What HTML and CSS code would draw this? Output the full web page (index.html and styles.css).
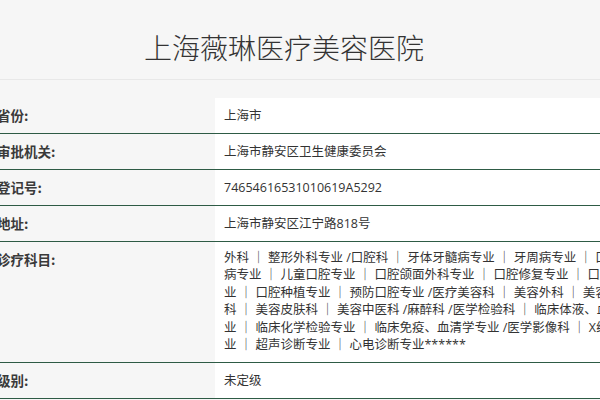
FILE: index.html
```
<!DOCTYPE html>
<html lang="zh-CN">
<head>
<meta charset="utf-8">
<title>上海薇琳医疗美容医院</title>
<link rel="stylesheet" href="styles.css">
</head>
<body>
<div class="page">
  <header class="head">
    <h1 class="title">上海薇琳医疗美容医院</h1>
  </header>
  <div class="info">
    <div class="row">
      <div class="k">省份:</div>
      <div class="v">上海市</div>
    </div>
    <div class="row">
      <div class="k">审批机关:</div>
      <div class="v">上海市静安区卫生健康委员会</div>
    </div>
    <div class="row">
      <div class="k">登记号:</div>
      <div class="v">74654616531010619A5292</div>
    </div>
    <div class="row">
      <div class="k">地址:</div>
      <div class="v">上海市静安区江宁路818号</div>
    </div>
    <div class="row multi">
      <div class="k">诊疗科目:</div>
      <div class="v">
        <span class="ln">外科 ｜ 整形外科专业 /口腔科 ｜ 牙体牙髓病专业 ｜ 牙周病专业 ｜ 口腔粘膜</span>
        <span class="ln">病专业 ｜ 儿童口腔专业 ｜ 口腔颌面外科专业 ｜ 口腔修复专业 ｜ 口腔正畸专</span>
        <span class="ln">业 ｜ 口腔种植专业 ｜ 预防口腔专业 /医疗美容科 ｜ 美容外科 ｜ 美容牙</span>
        <span class="ln">科 ｜ 美容皮肤科 ｜ 美容中医科 /麻醉科 /医学检验科 ｜ 临床体液、血液专业 ｜ 临床微生物学专</span>
        <span class="ln">业 ｜ 临床化学检验专业 ｜ 临床免疫、血清学专业 /医学影像科 ｜ X线诊断专业 ｜ CT诊断专</span>
        <span class="ln">业 ｜ 超声诊断专业 ｜ 心电诊断专业******</span>
      </div>
    </div>
    <div class="row">
      <div class="k">级别:</div>
      <div class="v">未定级</div>
    </div>
  </div>
</div>
</body>
</html>
```

FILE: styles.css
```
html, body {
  margin: 0;
  padding: 0;
}
body {
  background: #f6f6f6;
  color: #333;
  font-family: "Open Sans", "Noto Sans CJK SC", sans-serif;
  overflow: hidden;
}
.head {
  height: 80px;
  box-sizing: border-box;
  padding-top: 27px;
  border-bottom: 1px solid #e8e8e8;
}
.title {
  margin: 0;
  padding-right: 32px;
  font-family: "Noto Sans CJK SC", sans-serif;
  font-size: 28px;
  font-weight: 300;
  line-height: 40px;
  text-align: center;
  color: #333;
}
.info {
  margin-top: 18px;
}
.row {
  display: grid;
  grid-template-columns: 215px 1fr;
  min-height: 35px;
  border-bottom: 1px solid #2e5b45;
}
.k {
  font-family: "Noto Sans CJK SC", sans-serif;
  font-size: 13.5px;
  font-weight: 700;
  line-height: 35px;
  text-indent: -3px;
  color: #3a3a3a;
  white-space: nowrap;
}
.v {
  background: #fff;
  font-size: 12.5px;
  line-height: 17.4px;
  padding: 0 10px 0 9px;
  display: flex;
  align-items: center;
  overflow: hidden;
  white-space: nowrap;
  color: #333;
}
.multi .v {
  display: block;
  padding: 7px 10px 9px 9px;
}
.ln {
  display: block;
}
```
